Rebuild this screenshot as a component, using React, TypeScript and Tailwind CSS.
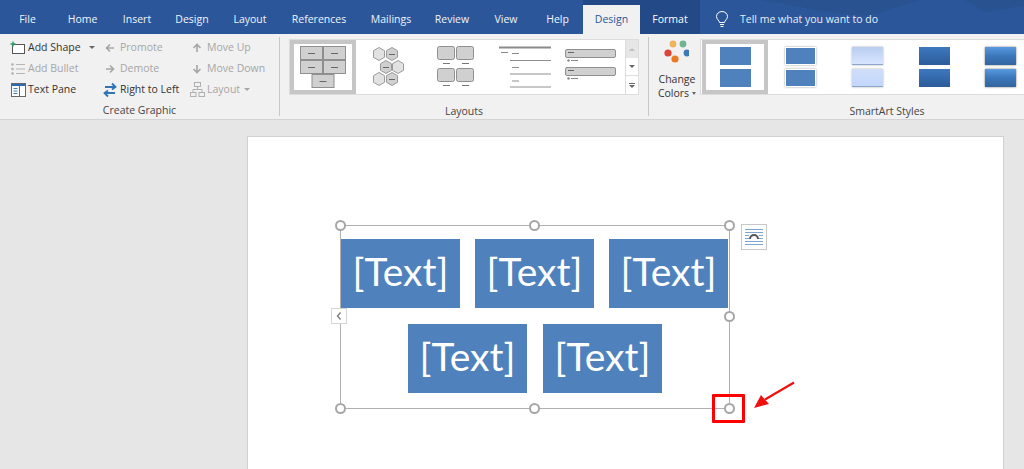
import React from "react";

const tabs: [string, number][] = [
  ["File", 55], ["Home", 55], ["Insert", 54], ["Design", 56], ["Layout", 60], ["References", 78], ["Mailings", 66], ["Review", 56], ["View", 52], ["Help", 51],
];

function Cmd({ icon, label, off, caret, w }: { icon: React.ReactNode; label: string; off?: boolean; caret?: boolean; w?: string }) {
  return (
    <div className={`flex items-center h-[21px] gap-[2px] ${off ? "text-[#a6a6a6]" : "text-[#333333]"} ${w ?? ""}`}>
      <span className="w-[16px] h-[16px] flex items-center justify-center shrink-0">{icon}</span>
      <span className="whitespace-nowrap">{label}</span>
      {caret && <span className="ml-[2px] w-0 h-0 border-x-[3px] border-x-transparent border-t-[3px] border-t-[#a6a6a6]" />}
    </div>
  );
}

const Arrow = ({ rot }: { rot: number }) => (
  <svg width="12" height="12" viewBox="0 0 12 12" style={{ transform: `rotate(${rot}deg)` }}>
    <path d="M10 6H3M6 2.5L2.5 6 6 9.5" fill="none" stroke="#a6a6a6" strokeWidth="1.6" />
  </svg>
);

function GalleryIcon1() {
  return (
    <svg width="48" height="44" viewBox="0 0 48 44">
      {[[1, 1], [24, 1], [1, 15], [24, 15], [12.5, 29]].map(([x, y], i) => (
        <g key={i}>
          <rect x={x + 0.5} y={y + 0.5} width="22" height="13" fill="#d0d0d0" stroke="#8f8f8f" />
          <path d={`M${x + 8} ${y + 7.5}h7`} stroke="#666" />
        </g>
      ))}
    </svg>
  );
}
function Hexes() {
  const pts = [[7, 7], [20, 7], [14, 20], [26, 20], [7, 32], [20, 32]];
  return (
    <svg width="34" height="40" viewBox="0 0 34 40">
      {pts.map(([x, y], i) => (
        <g key={i}>
          <path d={`M${x} ${y - 6.5}l5.5 3.2v6.600l-5.500 3.200-5.500-3.200v-6.600z`} fill={i === 0 || i === 3 || i === 4 ? "#e2e2e2" : "#d0d0d0"} stroke="#9a9a9a" />
          {i !== 0 && i !== 3 && i !== 4 && <path d={`M${x - 3} ${y + 0.5}h6`} stroke="#666" />}
        </g>
      ))}
    </svg>
  );
}
function Quad() {
  return (
    <svg width="40" height="42" viewBox="0 0 40 42">
      {[[1, 0], [20, 0], [1, 22], [20, 22]].map(([x, y], i) => (
        <g key={i}>
          <rect x={x + 0.5} y={y + 0.5} width="17" height="13" rx="2" fill="#d0d0d0" stroke="#8f8f8f" />
          <path d={`M${x + 6} ${y + 17.5}h7`} stroke="#777" />
        </g>
      ))}
    </svg>
  );
}
function Lines() {
  return (
    <svg width="54" height="42" viewBox="0 0 54 42">
      <path d="M1 1.5h52" stroke="#8a8a8a" strokeWidth="2" />
      <path d="M3 6.500h7M14 7.500h7" stroke="#8a8a8a" />
      <path d="M12 14.500h41M12 28h41M12 41h41" stroke="#8f8f8f" />
      <path d="M14 21.500h7M14 35h7" stroke="#8f8f8f" />
    </svg>
  );
}
function Bars() {
  return (
    <svg width="52" height="36" viewBox="0 0 52 36">
      {[0, 18].map((y) => (
        <g key={y}>
          <rect x="0.5" y={y + 0.5} width="50" height="8" rx="1.500" fill="#d0d0d0" stroke="#8f8f8f" />
          <path d={`M3 ${y + 3.500}h6`} stroke="#666" />
          <circle cx="3.500" cy={y + 11.500} r="1.200" fill="#888" />
          <path d={`M6 ${y + 11.500}h7`} stroke="#888" />
        </g>
      ))}
    </svg>
  );
}

function StyleThumb({ top, bot, cls, w }: { top: string; bot: string; cls?: string; w: string }) {
  return (
    <div className={`flex flex-col items-center justify-center gap-[4px] ${w}`}>
      <div className={`w-[31px] h-[18px] ${top} ${cls ?? ""}`} />
      <div className={`w-[31px] h-[18px] ${bot} ${cls ?? ""}`} />
    </div>
  );
}

function Handle({ pos }: { pos: string }) {
  return <span className={`absolute w-[11px] h-[11px] rounded-full bg-white border-2 border-[#a6a6a6] ${pos}`} />;
}

function Box() {
  return (
    <div className="w-[119px] h-[69px] pb-[4px] bg-[#4f81bd] flex items-center justify-center text-white text-[39px] leading-none font-['Lato',sans-serif]">[Text]</div>
  );
}

export default function App() {
  return (
    <div className="w-[1024px] h-[469px] overflow-hidden bg-[#e6e6e6] font-['Open_Sans',sans-serif] text-[10.5px]">
      {/* title tabs */}
      <div className="relative h-[34px] bg-[#2b579a] flex items-end text-white overflow-hidden">
        <svg className="absolute right-0 top-0" width="324" height="33" viewBox="0 0 324 33">
          <path d="M60 0C90 5 110 9 140 14c20 3 40 1 50-5l30-9zM265 0l20 12 20-3 19-4V0z" fill="#285290" />
        </svg>
        <div className="flex h-[29px] relative">
          {tabs.map(([t, w]) => (
            <div key={t + w} style={{ width: w }} className="flex items-center justify-center pt-[1px] text-[#f0f4fa]">{t}</div>
          ))}
          <div className="w-[57px] bg-[#f1f1f1] text-[#2b579a] flex items-center justify-center">Design</div>
          <div className="w-[60px] bg-[#234a86] flex items-center justify-center">Format</div>
          <div className="flex items-center pl-[15px] gap-[11px] w-[300px] text-[#e8eef7]">
            <svg width="14" height="17" viewBox="0 0 14 17" fill="none" stroke="#fff" strokeWidth="1">
              <path d="M4.500 11.500C4.500 9.500 1.500 8.500 1.500 5.500a5.500 5 0 0 1 11 0c0 3-3 4-3 6zM5 13.500h4M5.500 15.500h3" />
            </svg>
            <span className="whitespace-nowrap">Tell me what you want to do</span>
          </div>
        </div>
        <div className="absolute left-[583px] top-0 w-[117px] h-[5px] bg-[#234a86]" />
      </div>

      {/* ribbon */}
      <div className="h-[86px] bg-[#f1f1f1] border-b border-[#d4d4d4] flex">
        {/* Create Graphic */}
        <div className="w-[280px] shrink-0 border-r border-[#c8c8c8] my-[3px] flex flex-col">
          <div className="flex pl-[10px] h-[66px]">
            <div className="w-[92px] flex flex-col">
              <div className="flex items-center">
                <Cmd label="Add Shape" icon={
                  <svg width="16" height="14" viewBox="0 0 16 14"><rect x="2.500" y="3.500" width="12" height="9" fill="#fff" stroke="#555" /><path d="M3 .5v5M.5 3h5" stroke="#2e9a6a" strokeWidth="1.400" /></svg>
                } />
                <span className="ml-[8px] w-0 h-0 border-x-[3px] border-x-transparent border-t-[3px] border-t-[#666]" />
              </div>
              <Cmd off label="Add Bullet" icon={
                <svg width="14" height="12" viewBox="0 0 14 12"><path d="M5 1.500h9M5 6h9M5 10.500h9" stroke="#b5b5b5" /><circle cx="1.500" cy="1.500" r="1.300" fill="#b0b0b0" /><circle cx="1.500" cy="6" r="1.300" fill="#b0b0b0" /><circle cx="1.500" cy="10.500" r="1.300" fill="#b0b0b0" /></svg>
              } />
              <Cmd label="Text Pane" icon={
                <svg width="15" height="14" viewBox="0 0 15 14"><rect x=".5" y=".5" width="14" height="13" fill="#fff" stroke="#666" /><rect x="1" y="1" width="13" height="2" fill="#2b6cb0" /><path d="M8.500 3v10" stroke="#666" /><path d="M2.500 5.500h4M2.500 8h4M2.500 10.500h4" stroke="#3a7ab8" /></svg>
              } />
            </div>
            <div className="w-[87px] flex flex-col">
              <Cmd off label="Promote" icon={<Arrow rot={0} />} />
              <Cmd off label="Demote" icon={<Arrow rot={180} />} />
              <Cmd label="Right to Left" icon={
                <svg width="16" height="16" viewBox="0 0 16 16" fill="none" stroke="#2f75b5" strokeWidth="1.800"><path d="M3 5h10M10 1.500L13.500 5 10 7.500" /><path d="M13 11H3M6 8.500L2.500 11 6 14.500" /></svg>
              } />
            </div>
            <div className="flex flex-col">
              <Cmd off label="Move Up" icon={<Arrow rot={90} />} />
              <Cmd off label="Move Down" icon={<Arrow rot={270} />} />
              <Cmd off caret label="Layout" icon={
                <svg width="15" height="15" viewBox="0 0 15 15" fill="none" stroke="#b0b0b0"><rect x="4.500" y=".5" width="6" height="4" /><rect x=".5" y="10.500" width="5.500" height="4" /><rect x="9" y="10.500" width="5.500" height="4" /><path d="M7.500 4.500v3M3 10.500v-3h9v3" /></svg>
              } />
            </div>
          </div>
          <div className="text-center text-[#444] mt-[3px]">Create Graphic</div>
        </div>

        {/* Layouts */}
        <div className="w-[369px] shrink-0 border-r border-[#c8c8c8] my-[3px] flex flex-col items-start pl-[9px]">
          <div className="w-[350px] h-[56px] mt-[2px] bg-white border border-[#dcdcdc] flex">
            <div className="w-[66px] h-[54px] border-[4px] border-[#c6c6c6] flex items-center justify-center shrink-0"><GalleryIcon1 /></div>
            <div className="w-[66px] flex items-center justify-center shrink-0"><Hexes /></div>
            <div className="w-[68px] flex items-center justify-center shrink-0"><Quad /></div>
            <div className="w-[66px] pl-[4px] flex items-center justify-center shrink-0"><Lines /></div>
            <div className="w-[69px] flex items-center justify-center shrink-0"><Bars /></div>
            <div className="w-[13px] flex flex-col border-l border-[#dcdcdc] shrink-0">
              <div className="h-[18px] bg-[#e6e6e6] flex items-center justify-center"><span className="w-0 h-0 border-x-[3px] border-x-transparent border-b-[3px] border-b-[#c0c0c0]" /></div>
              <div className="h-[18px] border-b border-[#dcdcdc] flex items-center justify-center"><span className="w-0 h-0 border-x-[3px] border-x-transparent border-t-[3px] border-t-[#666]" /></div>
              <div className="flex-1 flex flex-col items-center justify-center gap-[1px]"><span className="w-[6px] h-[1px] bg-[#666]" /><span className="w-0 h-0 border-x-[3px] border-x-transparent border-t-[3px] border-t-[#666]" /></div>
            </div>
          </div>
          <div className="w-[350px] text-center text-[#444] mt-[9px] leading-[14px]">Layouts</div>
        </div>

        {/* Change colors */}
        <div className="w-[51px] shrink-0 flex flex-col items-center pt-[4px] pl-[5px] text-[#333] leading-[14px]">
          <svg width="28" height="26" viewBox="0 0 28 26" className="mb-[8px] mr-[5px]">
            <circle cx="12" cy="6" r="3.400" fill="#f0b45c" /><circle cx="22" cy="6" r="3.400" fill="#6fb592" />
            <circle cx="7" cy="15" r="3.600" fill="#db4437" /><circle cx="26" cy="15" r="3.400" fill="#3f78b8" />
            <circle cx="14" cy="21" r="3.600" fill="#ec7a22" />
          </svg>
          <span>Change</span>
          <span className="flex items-center gap-[3px]">Colors<span className="w-0 h-0 border-x-[2.500px] border-x-transparent border-t-[3px] border-t-[#666]" /></span>
        </div>

        {/* SmartArt Styles */}
        <div className="flex-1 my-[3px] flex flex-col min-w-0">
          <div className="h-[56px] mt-[2px] bg-white border border-[#dcdcdc] border-r-0 flex pl-[1px]">
            <div className="w-[66px] h-[54px] border-[4px] border-[#c6c6c6] flex items-center justify-center shrink-0">
              <StyleThumb w="w-[32px]" top="bg-[#4f81bd]" bot="bg-[#4f81bd]" />
            </div>
            <StyleThumb w="w-[65px] shrink-0" top="bg-[#4f81bd]" bot="bg-[#4f81bd]" cls="border border-white shadow-[0_0_2px_#999]" />
            <StyleThumb w="w-[68px] shrink-0" top="bg-gradient-to-b from-[#b9cdf0] to-[#d8e5ff]" bot="bg-gradient-to-b from-[#d0dff8] to-[#c3d6fb]" cls="border-b border-[#8ca6cc] shadow-[0_0_2px_#aaa]" />
            <StyleThumb w="w-[66px] shrink-0" top="bg-gradient-to-b from-[#3d78bf] to-[#2c5c9a]" bot="bg-gradient-to-b from-[#3d78bf] to-[#2c5c9a]" />
            <StyleThumb w="w-[67px] shrink-0" top="bg-gradient-to-b from-[#5a9ae0] via-[#3a76ba] to-[#34659f]" bot="bg-gradient-to-b from-[#5a9ae0] via-[#3a76ba] to-[#34659f]" cls="shadow-[0_0_2px_#777]" />
          </div>
          <div className="text-center text-[#444] mt-[9px] leading-[14px] pl-[48px] w-[324px] ml-[1px]">SmartArt Styles</div>
        </div>
      </div>

      {/* document */}
      <div className="pl-[247px] pt-[16px]">
        <div className="w-[757px] h-[340px] bg-white border border-[#d0d0d0] border-b-0 pl-[92px] pt-[88px]">
          <div className="relative w-[390px] h-[184px] border border-[#b0b0b0]">
            <div className="pt-[13px] flex flex-col gap-[16px]">
              <div className="flex gap-[15px] pl-[0px]"><Box /><Box /><Box /></div>
              <div className="flex gap-[16px] pl-[67px]"><Box /><Box /></div>
            </div>
            <Handle pos="left-[-6px] top-[-6px]" />
            <Handle pos="left-[188px] top-[-6px]" />
            <Handle pos="right-[-6px] top-[-6px]" />
            <Handle pos="right-[-6px] top-[85px]" />
            <Handle pos="left-[-6px] bottom-[-6px]" />
            <Handle pos="left-[188px] bottom-[-6px]" />
            <Handle pos="right-[-6px] bottom-[-6px]" />
            <div className="absolute left-[-10px] top-[82px] w-[16px] h-[16px] bg-white border border-[#d4d4d4] flex items-center justify-center">
              <svg width="8" height="10" viewBox="0 0 8 10" fill="none" stroke="#777" strokeWidth="1.300"><path d="M5.500 1.500L2.500 5l3 3.500" /></svg>
            </div>
            <div className="absolute left-[400px] top-[-2px] w-[26px] h-[26px] bg-white border border-[#c8c8c8] flex items-center justify-center">
              <svg width="20" height="18" viewBox="0 0 20 18" fill="none">
                <path d="M1 1.500h18M1 4.500h18M1 7.500h4M15 7.500h4M1 10.500h4M15 10.500h4M1 13.500h18M1 16.500h18" stroke="#7da7d0" />
                <path d="M6 11a4 4 0 0 1 8 0" stroke="#555" strokeWidth="2" />
              </svg>
            </div>
            <div className="absolute left-[371px] top-[168px] w-[33px] h-[29px] border-[3px] border-[#ff0000] rounded-[1px]" />
            <svg className="absolute left-[412px] top-[155px]" width="44" height="30" viewBox="0 0 44 30">
              <path d="M41 1.500L12 18.500" stroke="#f01010" strokeWidth="2.200" />
              <path d="M1 27l7-13 8 9z" fill="#f01010" />
            </svg>
          </div>
        </div>
      </div>
    </div>
  );
}
